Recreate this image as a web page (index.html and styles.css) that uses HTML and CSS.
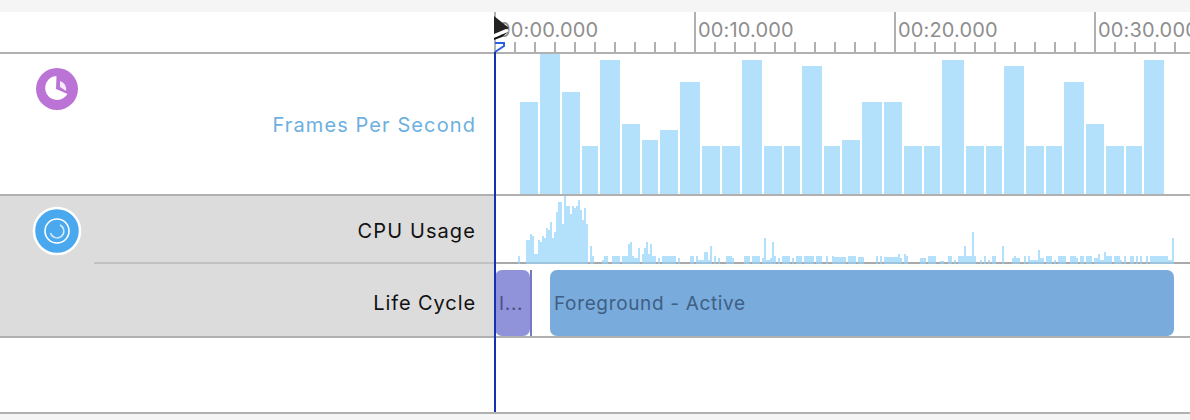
FILE: index.html
```html
<!DOCTYPE html>
<html lang="en">
<head>
    <meta charset="UTF-8">
    <title>Instruments Timeline</title>
    <link rel="stylesheet" href="styles.css">
</head>
<body>
    <div class="app">
        <div class="topbar"></div>

        <div class="ruler">
            <div class="ruler-side"></div>
            <div class="ruler-scale">
                <div class="decade">00:00.000</div>
                <div class="decade">00:10.000</div>
                <div class="decade">00:20.000</div>
                <div class="decade">00:30.000</div>
            </div>
        </div>

        <div class="track">
            <div class="track-icon">
                <svg class="icon" width="50" height="50" viewBox="0 0 50 50">
                    <circle cx="25" cy="25" r="21" fill="#bb74d5"/>
                    <path d="M24.500 12 A12 12 0 1 0 35.500 30 Q30 27.500 24 25 Z" fill="#fff"/>
                    <path d="M28 17 A8.500 8.500 0 0 1 34 27 L28 23 Z" fill="#fff" fill-opacity="0.85"/>
                </svg>
            </div>
            <div class="lanes">
                <div class="lane lane-fps">
                    <div class="lane-label label-blue">Frames Per Second</div>
                    <div class="lane-body fps-bars" id="fps"></div>
                </div>
            </div>
        </div>

        <div class="track track-active">
            <div class="track-icon">
                <svg class="icon" width="50" height="50" viewBox="0 0 50 50">
                    <circle cx="25" cy="25" r="23" fill="#4aa8ee" stroke="#fff" stroke-width="2.500"/>
                    <circle cx="25" cy="25" r="12" fill="none" stroke="#fff" stroke-width="1.600"/>
                    <path d="M28 19 A6.800 6.800 0 1 1 18.500 27" fill="none" stroke="#d3eafb" stroke-width="1.500"/>
                </svg>
            </div>
            <div class="lanes">
                <div class="lane lane-cpu">
                    <div class="lane-label">CPU Usage</div>
                    <div class="lane-body">
                        <svg class="cpu-chart" id="cpu" width="696" height="68" viewBox="494 196 696 68"></svg>
                    </div>
                </div>
                <div class="lane lane-cycle">
                    <div class="lane-label">Life Cycle</div>
                    <div class="lane-body cycle-blocks">
                        <div class="block block-purple">I...</div>
                        <div class="block-mark"></div>
                        <div class="block block-blue">Foreground - Active</div>
                    </div>
                </div>
            </div>
        </div>

        <div class="track track-empty"></div>

        <div class="playhead">
            <svg width="18" height="38" viewBox="0 0 18 38">
                <path d="M0 0 L15 12 L0 20 Z" fill="#222"/>
                <path d="M0 18 L12 13 L15 15 L0 22 Z" fill="#fff"/>
                <path d="M0 22 L14 16 L8 21 L0 24 Z" fill="#111"/>
                <path d="M1 27 H10 V30 L1 36" fill="none" stroke="#2a5fe0" stroke-width="2"/>
            </svg>
        </div>
    </div>

    <script src="app.js"></script>
</body>
</html>
```

FILE: styles.css
```css
* {
    box-sizing: border-box;
}
body {
    margin: 0;
    font-family: Inter, "Liberation Sans", sans-serif;
}
.app {
    position: relative;
    width: 1190px;
    height: 420px;
    overflow: hidden;
    background-color: #f5f5f5;
}
.topbar {
    height: 12px;
}
.ruler {
    display: flex;
    height: 42px;
    border-bottom: 2px solid #b0b0b0;
    background-color: #fff;
}
.ruler-side {
    flex: 0 0 494px;
}
.ruler-scale {
    display: flex;
    flex: 1;
    min-width: 0;
}
.decade {
    flex: 0 0 200px;
    padding: 6px 0 0 2px;
    border-left: 2px solid #b0b0b0;
    color: #8e8e8e;
    font-size: 20px;
    line-height: 24px;
    letter-spacing: 0.15px;
    white-space: nowrap;
    background-image: repeating-linear-gradient(to right, #b0b0b0 0, #b0b0b0 2px, transparent 2px, transparent 20px);
    background-size: 100% 10px;
    background-position: left bottom;
    background-repeat: no-repeat;
    background-origin: border-box;
}
.track {
    display: flex;
    height: 142px;
    border-bottom: 2px solid #b0b0b0;
    background-color: #fff;
}
.track-active {
    background-color: #dcdcdc;
}
.track-empty {
    height: 76px;
}
.track-icon {
    width: 94px;
    padding: 10px 0 0 32px;
}
.icon {
    display: block;
}
.lanes {
    flex: 1;
    display: flex;
    flex-direction: column;
}
.lane {
    display: flex;
}
.lane-label {
    width: 400px;
    padding-right: 18px;
    text-align: right;
    font-size: 20px;
    letter-spacing: 1.1px;
    color: #111;
}
.label-blue {
    color: #6cb0e0;
}
.lane-body {
    flex: 1;
    background-color: #fff;
}
.lane-fps {
    height: 140px;
}
.lane-fps .lane-label {
    padding-top: 59px;
    line-height: 24px;
}
.fps-bars {
    display: flex;
    align-items: flex-end;
    gap: 2px;
    padding-left: 26px;
}
.fps-bar {
    background-color: #b3e0fb;
}
.lane-cpu {
    height: 68px;
    border-bottom: 2px solid rgba(0, 0, 0, 0.12);
}
.lane-cpu .lane-label {
    padding-top: 23px;
    line-height: 24px;
}
.cpu-chart {
    display: block;
    margin-bottom: -2px;
}
.cpu-chart rect {
    fill: #b3e0fb;
}
.cpu-chart .cpu-line {
    fill: rgba(0, 0, 0, 0.12);
}
.lane-cycle {
    height: 72px;
}
.lane-cycle .lane-label {
    padding-top: 27px;
    line-height: 24px;
    letter-spacing: 0.9px;
}
.cycle-blocks {
    display: flex;
    padding-top: 6px;
}
.block {
    height: 66px;
    border-radius: 7px;
    font-size: 19px;
    line-height: 67px;
    letter-spacing: 0.65px;
    color: #3f5f85;
    white-space: nowrap;
}
.block-purple {
    width: 35px;
    margin-left: 1px;
    padding-left: 4px;
    background-color: #9193da;
    color: #4c4f86;
}
.block-mark {
    width: 2px;
    height: 66px;
    background-color: #7579c4;
}
.block-blue {
    width: 624px;
    margin-left: 18px;
    padding-left: 4px;
    background-color: #79abdc;
}
.playhead {
    position: absolute;
    left: 494px;
    top: 16px;
    width: 2px;
    height: 396px;
}
.playhead::after {
    content: "";
    position: absolute;
    left: 0;
    top: 36px;
    width: 2px;
    height: 360px;
    background-color: #1532b0;
}
.playhead svg {
    position: absolute;
    left: 0;
    top: 0;
}
```

FILE: app.js
```js
// widths and heights of the frame rate bars, left to right
const fpsWidths = [18, 20, 18, 16, 20, 18, 16, 18, 20, 18, 18, 20, 18, 16, 20, 16, 18, 20, 18, 18, 16, 22, 18, 16, 20, 18, 16, 20, 18, 18, 16, 20];
const fpsHeights = [92, 140, 102, 48, 134, 70, 54, 64, 112, 48, 48, 134, 48, 48, 128, 48, 54, 92, 92, 48, 48, 134, 48, 48, 128, 48, 48, 112, 70, 48, 48, 134];

const fps = document.getElementById('fps');
fpsWidths.forEach(function (w, i) {
    const bar = document.createElement('div');
    bar.className = 'fps-bar';
    bar.style.width = w + 'px';
    bar.style.height = fpsHeights[i] + 'px';
    fps.appendChild(bar);
});

// cpu samples as [x, width, height]
const cpuRuns = [
    [518, 2, 6], [526, 4, 22], [530, 2, 28], [532, 2, 26], [534, 4, 8], [538, 2, 22], [540, 2, 20], [542, 2, 26],
    [544, 2, 24], [546, 2, 34], [548, 2, 32], [550, 2, 40], [552, 2, 24], [554, 2, 30], [556, 2, 50], [558, 4, 60],
    [562, 2, 38], [564, 2, 66], [566, 4, 56], [570, 2, 48], [572, 2, 56], [574, 2, 54], [576, 2, 56], [578, 2, 62],
    [580, 2, 52], [582, 2, 42], [584, 2, 54], [586, 2, 38], [590, 2, 16], [592, 2, 6],
    [602, 2, 2], [604, 4, 6], [612, 4, 6], [616, 4, 6], [622, 6, 6], [628, 2, 18], [630, 2, 20], [632, 2, 6], [634, 4, 4],
    [638, 2, 14], [642, 2, 8], [644, 2, 14], [646, 2, 20], [648, 2, 8], [650, 2, 18], [652, 4, 6], [658, 2, 4],
    [662, 14, 6], [678, 2, 4], [690, 4, 6], [696, 2, 6], [698, 6, 2], [704, 4, 10], [708, 2, 2], [710, 2, 16], [714, 2, 6], [718, 2, 4], [726, 4, 6],
    [730, 2, 6], [732, 2, 4], [744, 6, 6], [752, 8, 6], [762, 2, 4], [764, 2, 24], [766, 4, 2], [770, 2, 4], [772, 2, 20], [774, 2, 6],
    [778, 2, 4], [782, 8, 6], [792, 2, 4], [796, 6, 6], [804, 10, 6], [816, 6, 6], [826, 2, 6], [832, 2, 6], [834, 12, 5],
    [848, 8, 6], [858, 6, 5], [876, 2, 6], [880, 2, 6], [884, 14, 5], [898, 2, 8], [900, 2, 4], [904, 2, 8], [906, 2, 6],
    [920, 6, 4], [928, 8, 6], [940, 4, 1], [948, 4, 6], [954, 2, 2], [958, 6, 6], [964, 2, 16], [966, 4, 6],
    [970, 2, 6], [972, 2, 30], [974, 2, 6], [980, 2, 2], [984, 2, 6], [988, 2, 2], [992, 4, 6],
    [1002, 2, 16], [1012, 8, 4], [1014, 2, 6], [1024, 2, 6], [1028, 2, 6], [1030, 8, 2], [1038, 2, 12], [1040, 4, 4],
    [1046, 6, 6], [1054, 2, 2], [1058, 8, 6], [1070, 6, 6], [1076, 2, 4], [1080, 4, 6], [1086, 6, 6], [1094, 4, 4],
    [1098, 2, 8], [1100, 4, 2], [1104, 2, 10], [1106, 6, 6], [1114, 6, 6], [1120, 2, 2], [1124, 2, 6], [1130, 4, 6],
    [1136, 2, 6], [1140, 2, 6], [1146, 2, 6], [1150, 18, 6], [1168, 4, 2], [1172, 2, 24]
];

const svgNs = 'http://www.w3.org/2000/svg';
const cpu = document.getElementById('cpu');

function addRect(x, y, w, h) {
    const rect = document.createElementNS(svgNs, 'rect');
    rect.setAttribute('x', x);
    rect.setAttribute('y', y);
    rect.setAttribute('width', w);
    rect.setAttribute('height', h);
    cpu.appendChild(rect);
    return rect;
}

cpuRuns.forEach(function (run) {
    addRect(run[0], 262 - run[2], run[1], run[2] + 2);
});

// separator sits over the samples
addRect(494, 262, 696, 2).setAttribute('class', 'cpu-line');
```
